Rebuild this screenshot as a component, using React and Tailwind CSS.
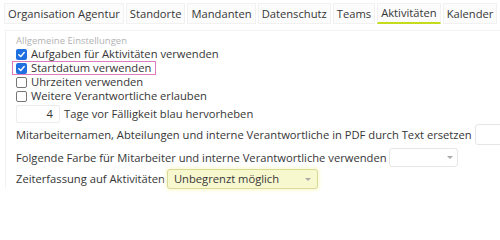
const tabs = ['Organisation Agentur', 'Standorte', 'Mandanten', 'Datenschutz', 'Teams', 'Aktivitäten', 'Kalender']

function Check({ checked }) {
  if (checked) {
    return (
      <span className="w-[11px] h-[11px] rounded-[2px] bg-[#1f6fe0] flex items-center justify-center shrink-0">
        <svg viewBox="0 0 10 10" className="w-[9px] h-[9px]">
          <path d="M2 5.2 L4.2 7.3 L8 2.8" fill="none" stroke="white" strokeWidth="1.6" strokeLinecap="round" strokeLinejoin="round" />
        </svg>
      </span>
    )
  }
  return <span className="w-[11px] h-[11px] rounded-[2px] border border-[#767676] bg-white shrink-0" />
}

function Caret() {
  return <span className="w-0 h-0 border-l-[3px] border-r-[3px] border-t-[3px] border-l-transparent border-r-transparent border-t-[#aaa]" />
}

export default function App() {
  return (
    <div className="w-[500px] h-[200px] bg-white overflow-hidden text-[#363636] text-[11.2px] leading-[14px]" style={{ fontFamily: '"Open Sans", sans-serif' }}>
      <div className="flex gap-[2px] pl-[4px] pt-[3px] whitespace-nowrap">
        {tabs.map((t) => (
          <div
            key={t}
            className={
              'h-[21px] px-[3px] flex items-center border border-[#f1f1f1] bg-[#fcfcfc] ' +
              (t === 'Aktivitäten' ? 'border-b-2 border-b-[#c4dc1c]' : '')
            }
          >
            {t}
          </div>
        ))}
      </div>

      <div className="ml-[5px] mt-[6px] border-t border-l border-[#f2f2f2] pl-[10px] pt-[5px] whitespace-nowrap">
        <div className="h-[11px] leading-[9px] text-[9.5px] text-[#b3b3b3]">Allgemeine Einstellungen</div>

        <div className="flex flex-col">
          <div className="h-[14px] flex items-center gap-[4px]">
            <Check checked />
            <span className="leading-[12px]">Aufgaben für Aktivitäten verwenden</span>
          </div>
          <div className="h-[14px] flex items-center gap-[4px] -ml-[4px] pl-[3px] w-[144px] border border-[#de7cc0]">
            <Check checked />
            <span className="leading-[12px]">Startdatum verwenden</span>
          </div>
          <div className="h-[14px] flex items-center gap-[4px]">
            <Check />
            <span className="leading-[12px]">Uhrzeiten verwenden</span>
          </div>
          <div className="h-[14px] flex items-center gap-[4px]">
            <Check />
            <span className="leading-[12px]">Weitere Verantwortliche erlauben</span>
          </div>
        </div>

        <div className="mt-[2px] flex items-center gap-[4px] h-[18px]">
          <div className="w-[44px] h-[18px] border border-[#ececec] rounded-[2px] flex items-center justify-end pr-[6px]">4</div>
          <span>Tage vor Fälligkeit blau hervorheben</span>
        </div>

        <div className="mt-[1px] flex items-center gap-[3px] h-[21px]">
          <span>Mitarbeiternamen, Abteilungen und interne Verantwortliche in PDF durch Text ersetzen</span>
          <div className="w-[40px] h-[21px] border border-[#e6e6e6] rounded-[3px] shrink-0" />
        </div>

        <div className="mt-[3px] flex items-center gap-[2px] h-[19px]">
          <span>Folgende Farbe für Mitarbeiter und interne Verantwortliche verwenden</span>
          <div className="w-[69px] h-[19px] border border-[#e6e6e6] rounded-[3px] flex items-center justify-end pr-[4px] shrink-0">
            <Caret />
          </div>
        </div>

        <div className="mt-[2px] flex items-center gap-[2px] h-[20px]">
          <span>Zeiterfassung auf Aktivitäten</span>
          <div className="w-[151px] h-[20px] border border-[#d9d99a] bg-[#f8f8cf] rounded-[3px] shadow-[0_0_3px_2px_#fbfbdc] flex items-center justify-between pl-[6px] pr-[6px] shrink-0">
            <span>Unbegrenzt möglich</span>
            <Caret />
          </div>
        </div>
      </div>
    </div>
  )
}
